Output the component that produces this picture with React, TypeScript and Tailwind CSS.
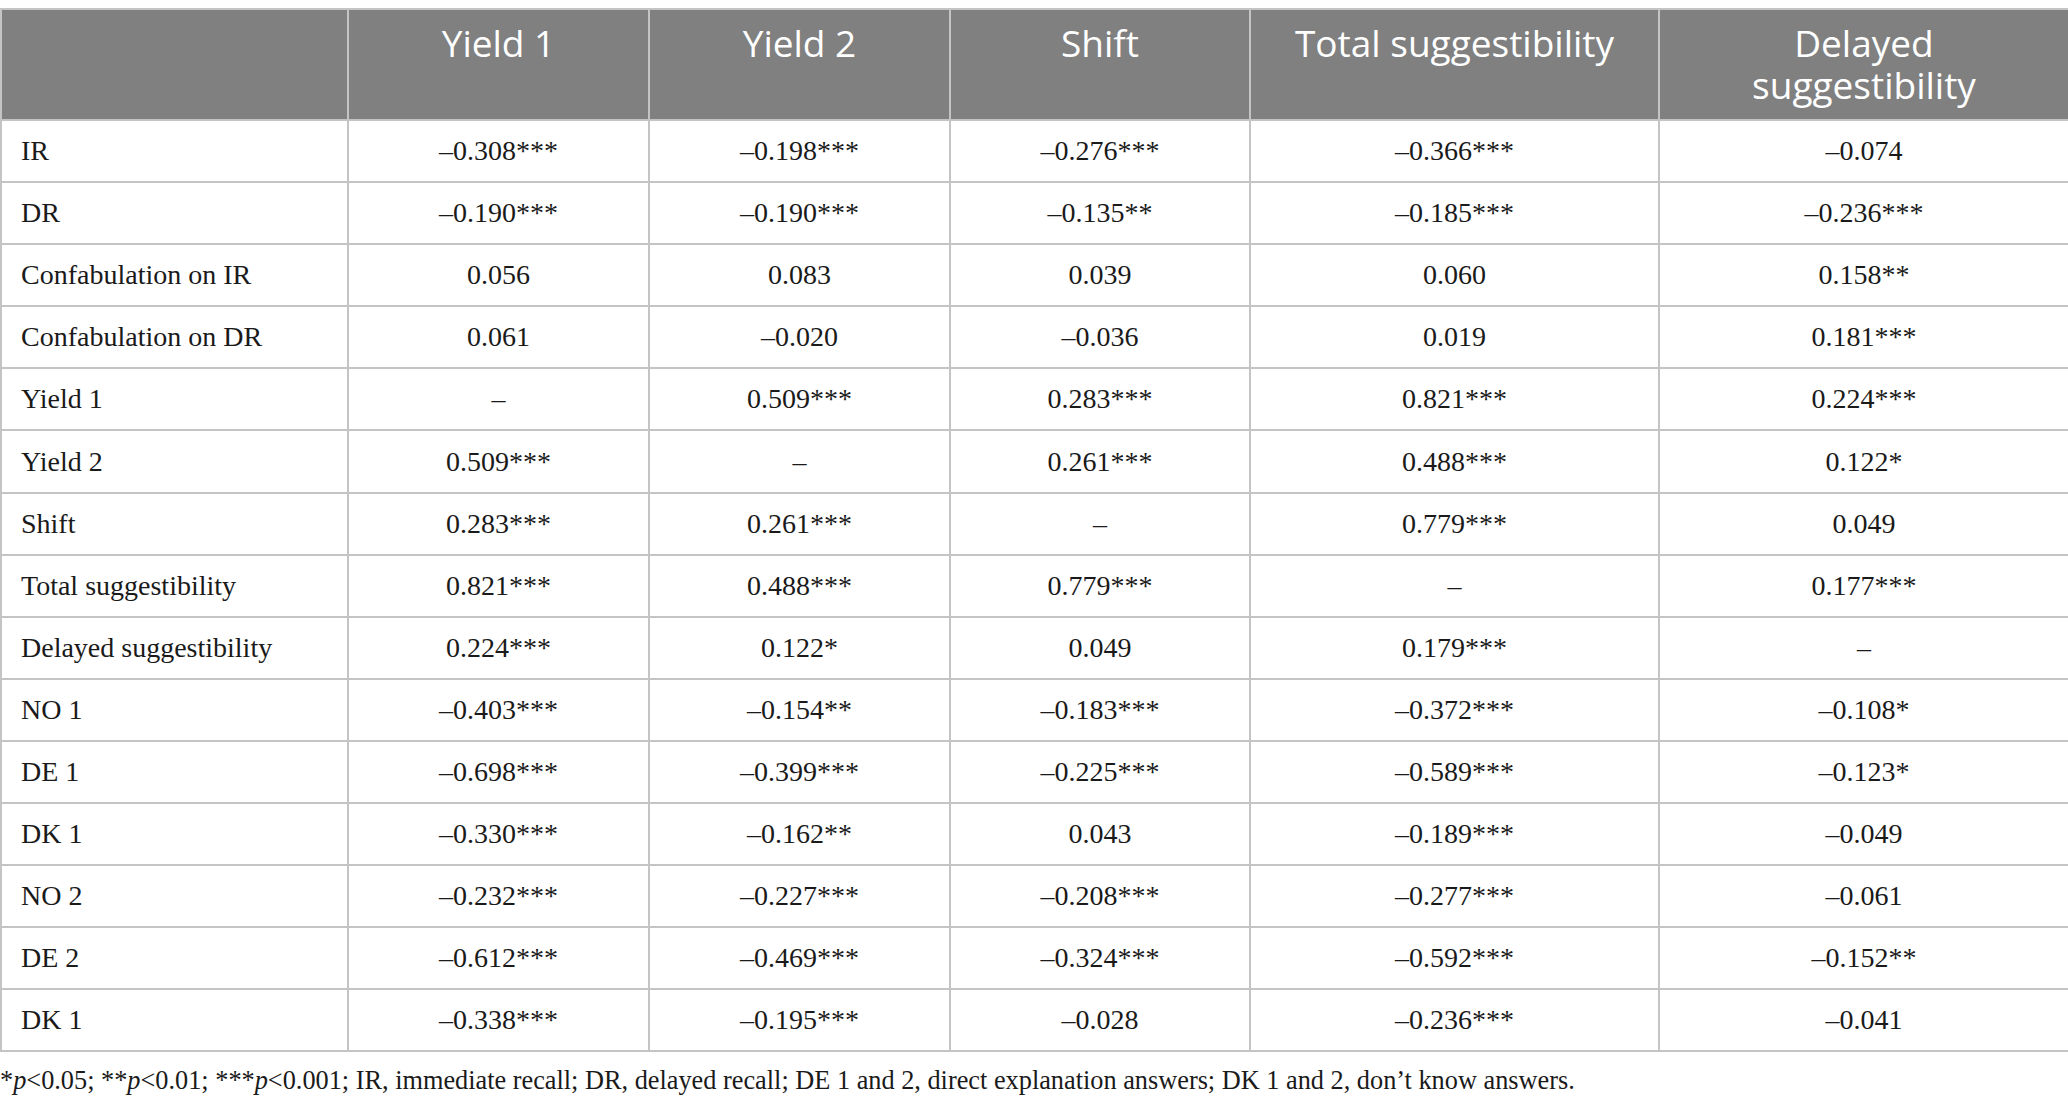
import React from "react";

const headers = ["Yield 1", "Yield 2", "Shift", "Total suggestibility", "Delayed suggestibility"];

const rows: [string, string, string, string, string, string][] = [
  ["IR", "–0.308***", "–0.198***", "–0.276***", "–0.366***", "–0.074"],
  ["DR", "–0.190***", "–0.190***", "–0.135**", "–0.185***", "–0.236***"],
  ["Confabulation on IR", "0.056", "0.083", "0.039", "0.060", "0.158**"],
  ["Confabulation on DR", "0.061", "–0.020", "–0.036", "0.019", "0.181***"],
  ["Yield 1", "–", "0.509***", "0.283***", "0.821***", "0.224***"],
  ["Yield 2", "0.509***", "–", "0.261***", "0.488***", "0.122*"],
  ["Shift", "0.283***", "0.261***", "–", "0.779***", "0.049"],
  ["Total suggestibility", "0.821***", "0.488***", "0.779***", "–", "0.177***"],
  ["Delayed suggestibility", "0.224***", "0.122*", "0.049", "0.179***", "–"],
  ["NO 1", "–0.403***", "–0.154**", "–0.183***", "–0.372***", "–0.108*"],
  ["DE 1", "–0.698***", "–0.399***", "–0.225***", "–0.589***", "–0.123*"],
  ["DK 1", "–0.330***", "–0.162**", "0.043", "–0.189***", "–0.049"],
  ["NO 2", "–0.232***", "–0.227***", "–0.208***", "–0.277***", "–0.061"],
  ["DE 2", "–0.612***", "–0.469***", "–0.324***", "–0.592***", "–0.152**"],
  ["DK 1", "–0.338***", "–0.195***", "–0.028", "–0.236***", "–0.041"],
];

export default function App() {
  return (
    <div className="w-[2068px] h-[1108px] bg-white overflow-hidden pt-2">
      <table className="w-[2068px] table-fixed border-collapse">
        <colgroup>
          <col className="w-[347px]" />
          <col className="w-[301px]" />
          <col className="w-[301px]" />
          <col className="w-[300px]" />
          <col className="w-[409px]" />
          <col className="w-[410px]" />
        </colgroup>
        <thead>
          <tr className="h-[111px] bg-[#7f807f]">
            <th className="border-2 border-[#c4c4c4]"></th>
            {headers.map((h) => (
              <th
                key={h}
                className="border-2 border-[#c4c4c4] align-top pt-[12px] px-2 text-center text-white font-normal text-[37px] leading-[42px] font-['Open_Sans',sans-serif]"
              >
                {h === "Delayed suggestibility" ? (
                  <>
                    Delayed
                    <br />
                    suggestibility
                  </>
                ) : (
                  h
                )}
              </th>
            ))}
          </tr>
        </thead>
        <tbody className="font-['Liberation_Serif',serif] text-[28px] text-[#1a1a1a]">
          {rows.map((r, i) => (
            <tr key={i} className="h-[62.1px]">
              <td className="border-2 border-[#c4c4c4] pl-[19px] text-left whitespace-nowrap">{r[0]}</td>
              {r.slice(1).map((c, j) => (
                <td key={j} className="border-2 border-[#c4c4c4] text-center whitespace-nowrap">
                  {c}
                </td>
              ))}
            </tr>
          ))}
        </tbody>
      </table>
      <p className="mt-[14px] font-['Liberation_Serif',serif] text-[26.3px] text-[#1a1a1a] whitespace-nowrap leading-[30px]">
        *<i>p</i>&lt;0.05; **<i>p</i>&lt;0.01; ***<i>p</i>&lt;0.001; IR, immediate recall; DR, delayed recall; DE 1 and 2, direct explanation answers; DK 1 and 2, don’t know answers.
      </p>
    </div>
  );
}
